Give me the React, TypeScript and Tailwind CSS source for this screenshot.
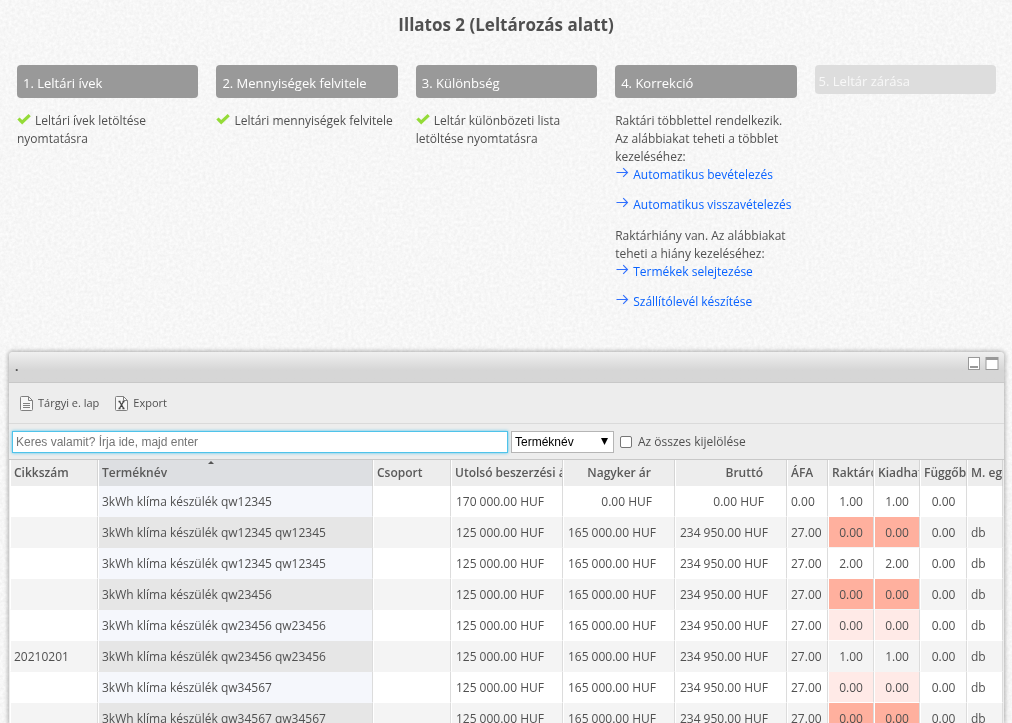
import React, { useState } from 'react';

type Step = { title: string; text?: string; active: boolean };

const steps: Step[] = [
    { title: '1. Leltári ívek', text: 'Leltári ívek letöltése nyomtatásra', active: true },
    { title: '2. Mennyiségek felvitele', text: 'Leltári mennyiségek felvitele', active: true },
    { title: '3. Különbség', text: 'Leltár különbözeti lista letöltése nyomtatásra', active: true },
    { title: '4. Korrekció', active: true },
    { title: '5. Leltár zárása', active: false },
];

type Row = { sku?: string; name: string; zero?: boolean; qty: string; unit?: string };

const rows: Row[] = [
    { name: '3kWh klíma készülék qw12345', zero: true, qty: '1.00' },
    { name: '3kWh klíma készülék qw12345 qw12345', qty: '0.00', unit: 'db' },
    { name: '3kWh klíma készülék qw12345 qw12345', qty: '2.00', unit: 'db' },
    { name: '3kWh klíma készülék qw23456', qty: '0.00', unit: 'db' },
    { name: '3kWh klíma készülék qw23456 qw23456', qty: '0.00', unit: 'db' },
    { sku: '20210201', name: '3kWh klíma készülék qw23456 qw23456', qty: '1.00', unit: 'db' },
    { name: '3kWh klíma készülék qw34567', qty: '0.00', unit: 'db' },
    { name: '3kWh klíma készülék qw34567 qw34567', qty: '0.00', unit: 'db' },
];

const headCell = 'h-[26px] overflow-hidden whitespace-nowrap border-r border-l border-r-[#d4d4d4] border-l-white p-0 pl-[3px] font-semibold text-[#5a5a5a]';
const bodyCell = 'h-[31px] overflow-hidden whitespace-nowrap border-r border-l border-b border-r-[#dcdcdc] border-l-white p-0 pt-0.5';

const Check = () => (
    <svg className="mr-1 inline-block h-3 w-3.5 align-[-1px]" viewBox="0 0 14 12">
        <path d="M0.3 5.6 L2.6 3.4 L5.2 5.9 L11.6 0.1 L13.8 2.3 L5.2 10.6 Z" fill="#94db38" />
    </svg>
);

const StepLink = ({ children }: { children: React.ReactNode }) => (
    <a href="#" className="flex text-[#0a63ff]">
        <svg className="mr-[3px] h-3 w-[15px] shrink-0" viewBox="0 0 15 12">
            <path d="M1.5 6.5 H12.5 M8.2 2.2 L12.5 6.5 L8.2 10.8" fill="none" stroke="#2f6fff" strokeWidth="1.1" />
        </svg>
        {children}
    </a>
);

const DocIcon = ({ excel }: { excel?: boolean }) => (
    <svg className="h-[15px] w-[13px]" viewBox="0 0 13 15" fill="none" stroke="#808080">
        <path d="M1.5 0.5 H8.5 L12.5 4.5 V13.5 Q12.5 14.5 11.5 14.5 H1.5 Q0.5 14.5 0.5 13.5 V1.5 Q0.5 0.5 1.5 0.5 Z" fill="#f7f7f7" />
        <path d="M8.5 0.5 V4.5 H12.5" />
        {excel ? (
            <path d="M3.5 5.5 H5.5 M7.5 5.5 H9.5 M3.5 12.5 H5.5 M7.5 12.5 H9.5 M4.5 5.5 L8.7 12.5 M8.6 5.5 L4.4 12.5" stroke="#444" strokeWidth="1.3" />
        ) : (
            <path d="M3 7.5 H10 M3 9.5 H10 M3 11.5 H10" />
        )}
    </svg>
);

const Background = () => (
    <svg className="fixed inset-0 -z-10 h-full w-full" aria-hidden="true">
        <filter id="grain">
            <feTurbulence type="fractalNoise" baseFrequency="0.33" numOctaves="4" seed="4" />
            <feColorMatrix values="0 0 0 0 0  0 0 0 0 0  0 0 0 0 0  0.07 0 0 0 -0.014" />
        </filter>
        <rect width="100%" height="100%" fill="#fcfcfc" />
        <rect width="100%" height="100%" filter="url(#grain)" />
    </svg>
);

const App: React.FC = () => {
    const [query, setQuery] = useState('');
    const [field, setField] = useState('Terméknév');
    const [all, setAll] = useState(false);

    return (
        <div className="isolate flex h-screen flex-col overflow-hidden font-['Open_Sans',sans-serif] text-xs text-[#505050]">
            <Background />
            <h1 className="mt-3 text-center text-[17px] leading-[26px] font-bold">Illatos 2 (Leltározás alatt)</h1>

            {/* STEPS */}
            <div className="mt-[27px] grid h-[287px] shrink-0 grid-cols-5 items-start gap-[18px] pr-4 pl-[17px]">
                {steps.map((step) => (
                    <section key={step.title}>
                        <h2
                            className={
                                step.active
                                    ? 'rounded bg-[#999] px-1.5 pt-1 text-[13px] leading-[29px] font-medium text-white'
                                    : 'rounded bg-[#ddd] px-1 pt-1 text-[13px] leading-[25px] font-medium text-[#f8f8f8]'
                            }
                        >
                            {step.title}
                        </h2>
                        {step.text && (
                            <p className="mt-3.5 leading-[18px]">
                                <Check />
                                {step.text}
                            </p>
                        )}
                        {step.title === '4. Korrekció' && (
                            <div className="mt-3.5 leading-[18px]">
                                <p>Raktári többlettel rendelkezik. Az alábbiakat teheti a többlet kezeléséhez:</p>
                                <div className="mb-[13px] flex flex-col gap-3">
                                    <StepLink>Automatikus bevételezés</StepLink>
                                    <StepLink>Automatikus visszavételezés</StepLink>
                                </div>
                                <p>Raktárhiány van. Az alábbiakat teheti a hiány kezeléséhez:</p>
                                <div className="flex flex-col gap-3">
                                    <StepLink>Termékek selejtezése</StepLink>
                                    <StepLink>Szállítólevél készítése</StepLink>
                                </div>
                            </div>
                        )}
                    </section>
                ))}
            </div>

            {/* GRID WINDOW */}
            <div className="mr-2 ml-[9px] flex min-h-0 flex-1 flex-col rounded-t bg-[#ededed] shadow-[0_0_4px_1px_rgba(0,0,0,0.3)]">
                <div className="flex h-[31px] shrink-0 items-start justify-between rounded-t border-b border-[#c8c8c8] bg-linear-to-b from-[#f0f0f0] to-[#d6d6d6] to-60% pr-[5px] pl-1.5">
                    <span className="pt-1.5 leading-[18px] font-bold">.</span>
                    <div className="flex gap-1 pt-[5px]">
                        <button type="button" aria-label="Kis méret">
                            <svg className="h-[13px] w-3.5" viewBox="0 0 14 13">
                                <rect x="1.5" y="0.5" width="11" height="12" fill="#fff" stroke="#999" />
                                <rect x="3" y="9" width="8" height="2" fill="#999" />
                            </svg>
                        </button>
                        <button type="button" aria-label="Teljes méret">
                            <svg className="h-[13px] w-3.5" viewBox="0 0 14 13">
                                <rect x="1" y="0.5" width="12" height="12" fill="#fff" stroke="#999" />
                                <rect x="1" y="0" width="12" height="3" fill="#999" />
                            </svg>
                        </button>
                    </div>
                </div>

                <div className="flex h-[41px] shrink-0 items-center gap-4 border-b border-[#dadada] pl-[11px] text-[11px]">
                    <button type="button" className="flex items-center gap-[5px]">
                        <DocIcon />
                        Tárgyi e. lap
                    </button>
                    <button type="button" className="flex items-center gap-[5px]">
                        <DocIcon excel />
                        Export
                    </button>
                </div>

                <div className="flex h-9 shrink-0 items-center border-b border-[#c8c8c8] pl-[3px]">
                    <input
                        type="text"
                        aria-label="Keresés"
                        autoFocus
                        value={query}
                        onChange={(e) => setQuery(e.target.value)}
                        placeholder="Keres valamit? Írja ide, majd enter"
                        className="h-[22px] w-1/2 border border-[#4fc3ea] bg-white pl-[3px] font-['Liberation_Sans',sans-serif] text-xs text-black caret-black shadow-[0_0_3px_#4fc3ea] outline-none placeholder:text-[#757575]"
                    />
                    <div className="relative ml-[3px]">
                        <select
                            aria-label="Keresési mező"
                            value={field}
                            onChange={(e) => setField(e.target.value)}
                            className="block h-[22px] w-[103px] appearance-none border border-[#b5b5b5] bg-white pl-[3px] font-['Liberation_Sans',sans-serif] text-xs text-black"
                        >
                            <option>Terméknév</option>
                            <option>Cikkszám</option>
                        </select>
                        <svg className="pointer-events-none absolute top-[7px] right-1.5 h-[7px] w-[7px]" viewBox="0 0 7 7">
                            <path d="M0 0 H7 L3.5 7 Z" fill="#000" />
                        </svg>
                    </div>
                    <label className="ml-1.5 flex items-center gap-1.5">
                        <input
                            type="checkbox"
                            checked={all}
                            onChange={(e) => setAll(e.target.checked)}
                            className="h-3 w-3 appearance-none rounded-xs border border-[#767676] bg-white checked:bg-[#0a63ff]"
                        />
                        Az összes kijelölése
                    </label>
                </div>

                <div className="min-h-0 flex-1 overflow-hidden px-px">
                    <table className="w-full table-fixed border-separate border-spacing-0">
                        <colgroup>
                            <col className="w-[88px]" />
                            <col />
                            <col className="w-[78px]" />
                            <col className="w-[112px]" />
                            <col className="w-[112px]" />
                            <col className="w-[112px]" />
                            <col className="w-[41px]" />
                            <col className="w-[46px]" />
                            <col className="w-[46px]" />
                            <col className="w-[47px]" />
                            <col className="w-[36px]" />
                        </colgroup>
                        <thead>
                            <tr className="bg-[#ededed] text-left">
                                <th className={headCell}>Cikkszám</th>
                                <th className={`${headCell} relative bg-[#dddfe2]`}>
                                    Terméknév
                                    <svg className="absolute top-px left-[109px] h-[3px] w-1.5" viewBox="0 0 6 3">
                                        <path d="M0 3 L3 0 L6 3 Z" fill="#555" />
                                    </svg>
                                </th>
                                <th className={headCell}>Csoport</th>
                                <th className={headCell}>Utolsó beszerzési ár</th>
                                <th className={`${headCell} pr-[23px] text-right`}>Nagyker ár</th>
                                <th className={`${headCell} pr-[23px] text-right`}>Bruttó</th>
                                <th className={headCell}>ÁFA</th>
                                <th className={headCell}>Raktáron</th>
                                <th className={headCell}>Kiadható</th>
                                <th className={headCell}>Függőben</th>
                                <th className={headCell}>M. egys.</th>
                            </tr>
                        </thead>
                        <tbody>
                            {rows.map((row, i) => {
                                const even = i % 2 === 1;
                                const rowBg = even ? 'bg-[#f4f4f4] border-b-[#f4f4f4]' : 'bg-white border-b-white';
                                const qtyBg =
                                    row.qty !== '0.00'
                                        ? rowBg
                                        : even
                                          ? 'bg-[#ffb09e] border-b-[#f4f4f4]'
                                          : 'bg-[#ffeae7] border-b-white';
                                const nameBg = even ? 'bg-[#e6e6e6] border-b-[#e6e6e6]' : 'bg-[#f5f7fc] border-b-[#f5f7fc]';
                                const price = row.zero ? 'pr-[22px]' : 'pr-[18px]';

                                return (
                                    <tr key={i}>
                                        <td className={`${bodyCell} ${rowBg} pl-[3px]`}>{row.sku}</td>
                                        <td className={`${bodyCell} ${nameBg} pl-[3px]`}>{row.name}</td>
                                        <td className={`${bodyCell} ${rowBg}`}></td>
                                        <td className={`${bodyCell} ${rowBg} pr-[18px] text-right`}>{row.zero ? '170 000.00 HUF' : '125 000.00 HUF'}</td>
                                        <td className={`${bodyCell} ${rowBg} ${price} text-right`}>{row.zero ? '0.00 HUF' : '165 000.00 HUF'}</td>
                                        <td className={`${bodyCell} ${rowBg} ${price} text-right`}>{row.zero ? '0.00 HUF' : '234 950.00 HUF'}</td>
                                        <td className={`${bodyCell} ${rowBg} pl-[3px]`}>{row.zero ? '0.00' : '27.00'}</td>
                                        <td className={`${bodyCell} ${qtyBg} text-center`}>{row.qty}</td>
                                        <td className={`${bodyCell} ${qtyBg} text-center`}>{row.qty}</td>
                                        <td className={`${bodyCell} ${rowBg} text-center`}>0.00</td>
                                        <td className={`${bodyCell} ${rowBg} pl-[3px]`}>{row.unit}</td>
                                    </tr>
                                );
                            })}
                        </tbody>
                    </table>
                </div>
            </div>
        </div>
    );
};

export default App;
